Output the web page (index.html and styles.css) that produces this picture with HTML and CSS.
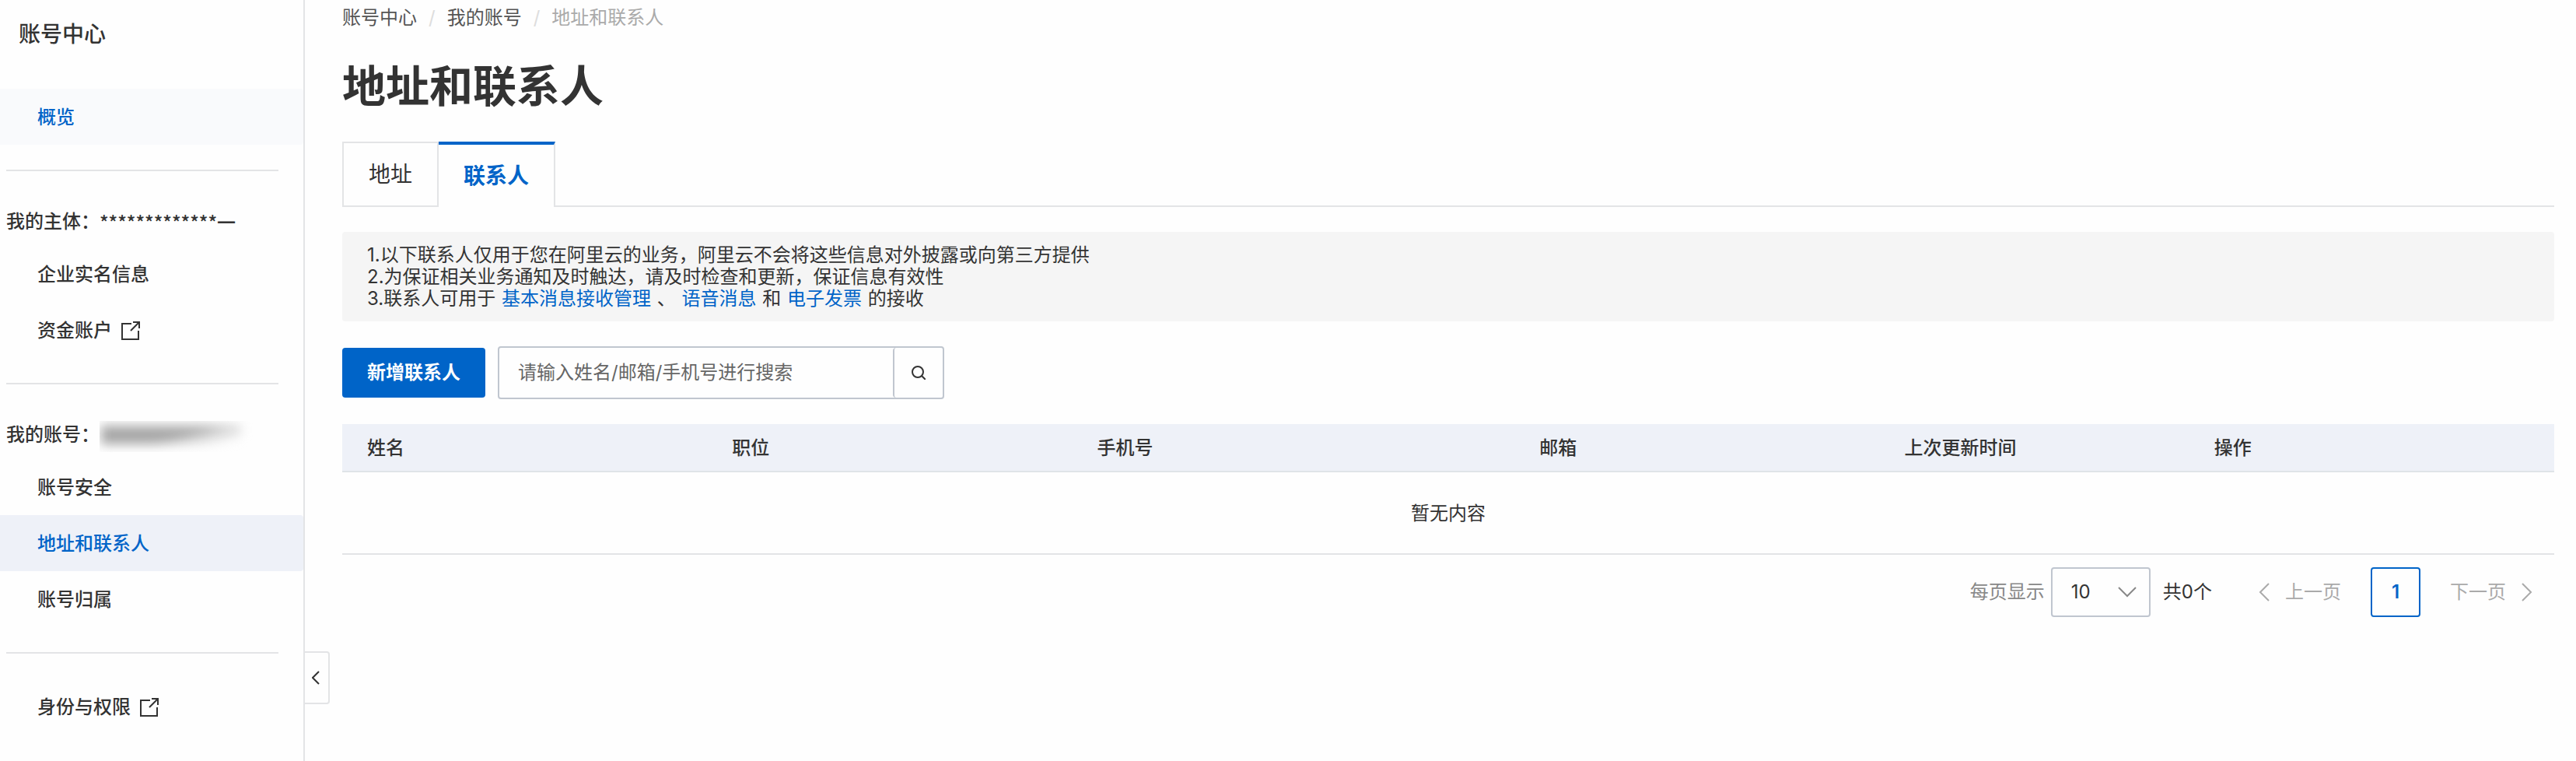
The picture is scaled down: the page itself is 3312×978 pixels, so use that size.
FILE: index.html
```html
<!DOCTYPE html>
<html lang="zh-CN">
<head>
<meta charset="utf-8">
<meta name="viewport" content="width=device-width, initial-scale=1">
<title>地址和联系人</title>
<link rel="stylesheet" href="styles.css">
</head>
<body>
<div class="layout">
  <aside class="sidebar">
    <h2 class="sidebar-title">账号中心</h2>
    <nav class="menu">
      <div class="menu-group">
        <a class="menu-item is-hover" href="#">概览</a>
      </div>
      <div class="menu-group">
        <p class="menu-heading">我的主体：<span class="masked">*************一</span></p>
        <a class="menu-item" href="#">企业实名信息</a>
        <a class="menu-item" href="#">资金账户
          <svg class="icon-external" viewBox="0 0 24 24" aria-hidden="true"><path d="M13 3H1V23H22V12M12 12L22 2M15 1H23V9"/></svg>
        </a>
      </div>
      <div class="menu-group">
        <p class="menu-heading">我的账号：<span class="smudge"><span class="smudge-ink"></span></span></p>
        <a class="menu-item" href="#">账号安全</a>
        <a class="menu-item is-active" href="#" aria-current="page">地址和联系人</a>
        <a class="menu-item" href="#">账号归属</a>
      </div>
      <div class="menu-group">
        <a class="menu-item" href="#">身份与权限
          <svg class="icon-external" viewBox="0 0 24 24" aria-hidden="true"><path d="M13 3H1V23H22V12M12 12L22 2M15 1H23V9"/></svg>
        </a>
      </div>
    </nav>
    <button class="collapse" type="button" aria-label="收起菜单">
      <svg class="icon-collapse" viewBox="0 0 10 18" aria-hidden="true"><path d="M9 1L1 9L9 17"/></svg>
    </button>
  </aside>

  <main class="content">
    <nav class="breadcrumb" aria-label="面包屑">
      <a href="#">账号中心</a><span class="slash">/</span><a href="#">我的账号</a><span class="slash">/</span><span class="current">地址和联系人</span>
    </nav>
    <h1 class="page-title">地址和联系人</h1>

    <div class="tabs" role="tablist">
      <button class="tab" type="button" role="tab" aria-selected="false">地址</button>
      <button class="tab is-selected" type="button" role="tab" aria-selected="true">联系人</button>
      <div class="tabs-rest"></div>
    </div>

    <section class="notice">
      <p>1.以下联系人仅用于您在阿里云的业务，阿里云不会将这些信息对外披露或向第三方提供</p>
      <p>2.为保证相关业务通知及时触达，请及时检查和更新，保证信息有效性</p>
      <p>3.联系人可用于 <a href="#">基本消息接收管理</a> 、 <a href="#">语音消息</a> 和 <a href="#">电子发票</a> 的接收</p>
    </section>

    <div class="toolbar">
      <button class="primary" type="button">新增联系人</button>
      <form class="search" role="search">
        <input class="search-input" type="text" aria-label="搜索联系人" placeholder="请输入姓名/邮箱/手机号进行搜索">
        <button class="search-button" type="button" aria-label="搜索">
          <svg class="icon-search" viewBox="0 0 18 18" aria-hidden="true"><circle cx="8" cy="8" r="7"/><path d="M13 13L18 18"/></svg>
        </button>
      </form>
    </div>

    <table class="contacts">
      <colgroup>
        <col class="col-default"><col class="col-default"><col class="col-phone"><col class="col-default"><col class="col-time"><col class="col-default">
      </colgroup>
      <thead>
        <tr><th scope="col">姓名</th><th scope="col">职位</th><th scope="col">手机号</th><th scope="col">邮箱</th><th scope="col">上次更新时间</th><th scope="col">操作</th></tr>
      </thead>
      <tbody>
        <tr><td colspan="6">暂无内容</td></tr>
      </tbody>
    </table>

    <div class="pagination">
      <label class="size-label" for="page-size">每页显示</label>
      <div class="select">
        <select id="page-size"><option>10</option><option>20</option><option>50</option></select>
        <svg class="icon-down" viewBox="0 0 24 14" aria-hidden="true"><path d="M1 1L12 12L23 1"/></svg>
      </div>
      <span class="total">共0个</span>
      <button class="step prev" type="button" disabled>
        <svg class="icon-step" viewBox="0 0 14 24" aria-hidden="true"><path d="M13 1L2 12L13 23"/></svg>上一页
      </button>
      <button class="page" type="button" aria-current="page">1</button>
      <button class="step next" type="button" disabled>下一页
        <svg class="icon-step" viewBox="0 0 14 24" aria-hidden="true"><path d="M1 1L12 12L1 23"/></svg>
      </button>
    </div>
  </main>
</div>
</body>
</html>
```
FILE: styles.css
```css
:root {
  --text: #333;
  --blue: #0064c8;
  --line: #e3e4e6;
  --field: #c0c6cf;
  --tint: #eef1f8;
}

* { box-sizing: border-box; }

body, h1, h2, p { margin: 0; }

body {
  background: #fefefe;
  color: var(--text);
  font-family: Inter, "Noto Sans CJK SC", sans-serif;
  font-size: 24px;
  line-height: 36px;
}

button, input, select {
  font: inherit;
  color: inherit;
  background: none;
  border: 0;
  border-radius: 0;
  margin: 0;
  padding: 0;
}

a { color: var(--blue); text-decoration: none; }

svg { fill: none; stroke: currentColor; stroke-width: 2; flex: none; }

.layout { display: flex; min-height: 100vh; }

/* Sidebar */
.sidebar {
  position: relative;
  flex: none;
  width: 392px;
  border-right: 2px solid var(--line);
}

.sidebar-title {
  padding: 24px 24px 50px;
  font-size: 28px;
  font-weight: 500;
  line-height: 40px;
}

.menu-group + .menu-group::before {
  content: "";
  display: block;
  height: 2px;
  margin: 32px 32px 32px 8px;
  background: var(--line);
}

.menu-heading {
  display: flex;
  align-items: center;
  height: 64px;
  padding: 2px 0 0 8px;
  font-weight: 500;
}

.masked { font-family: "Noto Sans CJK SC", sans-serif; }

.menu-item {
  display: flex;
  align-items: center;
  gap: 12px;
  height: 72px;
  padding: 2px 0 0 48px;
  border-radius: 0 4px 4px 0;
  color: var(--text);
  font-weight: 500;
}

.is-hover { background: #f9fafc; color: var(--blue); }
.is-active { background: var(--tint); color: var(--blue); }

.icon-external { width: 24px; height: 24px; }

.smudge { width: 204px; height: 40px; margin-top: 4px; overflow: hidden; }

.smudge-ink {
  display: block;
  width: 180px;
  height: 24px;
  margin: 6px 0 0 2px;
  background: linear-gradient(165deg, #a8a8a8 55%, #d0d0d0 65%, transparent 90%);
  filter: blur(7px);
}

.collapse {
  position: absolute;
  left: 100%;
  bottom: 73px;
  display: flex;
  align-items: center;
  justify-content: center;
  width: 34px;
  height: 68px;
  border: 2px solid var(--line);
  border-left: 0;
  border-radius: 0 4px 4px 0;
}

.icon-collapse { width: 10px; height: 18px; }

/* Content */
.content { flex: 1; min-width: 0; padding: 5px 28px 32px 48px; }

.breadcrumb { display: flex; gap: 15px; }
.breadcrumb a { color: #555; }
.slash { color: #ddd; }
.breadcrumb .current { color: #aaa; }

.page-title {
  padding: 31px 0 32px;
  font-size: 56px;
  font-weight: 600;
  line-height: 78px;
}

.tabs { display: flex; height: 84px; }

.tab {
  padding: 0 32px;
  border: 2px solid var(--line);
  font-size: 28px;
}

.tab.is-selected {
  border-top: 4px solid var(--blue);
  border-bottom: 0;
  border-left: 0;
  color: var(--blue);
  font-weight: 600;
}

.tabs-rest { flex: 1; border-bottom: 2px solid var(--line); }

.notice {
  margin-top: 32px;
  padding: 16px 32px 15px;
  border-radius: 4px;
  background: #f5f5f5;
  line-height: 28px;
}

.notice a { margin: 0 1px; }

.toolbar { display: flex; align-items: center; gap: 16px; margin: 32px 0; }

.primary {
  height: 64px;
  padding: 0 32px;
  border-radius: 4px;
  background: var(--blue);
  color: #fff;
  font-weight: 600;
}

.search {
  display: flex;
  width: 574px;
  height: 68px;
  border: 2px solid var(--field);
  border-radius: 4px;
}

.search-input { flex: 1; min-width: 0; padding: 0 24px; outline: 0; }
.search-input::placeholder { color: #666; opacity: 1; }

.search-button {
  display: flex;
  align-items: center;
  justify-content: center;
  width: 64px;
  border-left: 2px solid var(--field);
  border-radius: 4px 0 0 4px;
}

.icon-search { width: 18px; height: 18px; }

.contacts { width: 100%; table-layout: fixed; border-collapse: separate; border-spacing: 0; }
.col-default { width: 16.5%; }
.col-phone { width: 20%; }
.col-time { width: 14%; }

.contacts th {
  padding: 13px 32px 11px;
  border-bottom: 2px solid #dfe4e8;
  background: var(--tint);
  font-weight: 500;
  text-align: left;
}

.contacts td {
  padding: 35px 32px 33px;
  border-bottom: 2px solid var(--line);
  text-align: center;
}

.pagination {
  display: flex;
  align-items: center;
  justify-content: flex-end;
  margin-top: 16px;
  padding-right: 28px;
}

.size-label { margin-right: 8px; color: #888; }

.select { position: relative; width: 128px; height: 64px; margin-right: 16px; }

.select select {
  width: 100%;
  height: 100%;
  padding: 0 24px;
  border: 2px solid var(--field);
  border-radius: 4px;
  appearance: none;
}

.icon-down {
  position: absolute;
  top: 25px;
  right: 18px;
  width: 24px;
  height: 14px;
  color: #888;
  pointer-events: none;
}

.step { display: flex; align-items: center; gap: 20px; color: #aaa; }
.prev { margin: 0 38px 0 60px; }
.next { margin-left: 38px; }
.icon-step { width: 14px; height: 24px; }

.page {
  width: 64px;
  height: 64px;
  border: 2px solid var(--blue);
  border-radius: 4px;
  color: var(--blue);
  font-weight: 600;
}
```
